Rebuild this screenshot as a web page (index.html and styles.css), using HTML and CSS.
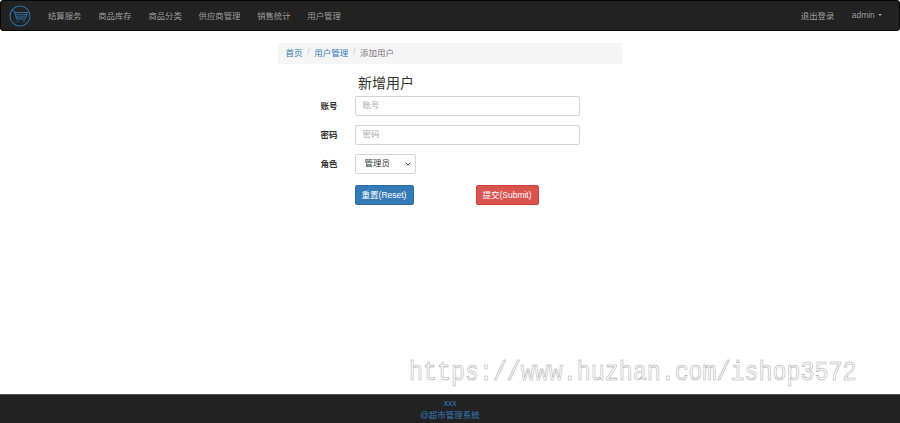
FILE: index.html
```html
<!DOCTYPE html>
<html lang="en">
<head>
    <meta charset="UTF-8">
    <title>超市管理系统</title>
    <link rel="stylesheet" href="styles.css">
</head>
<body>

    <!-- Top navigation -->
    <nav class="navbar">
        <svg class="logo" viewBox="0 0 22 22" width="22" height="22" fill="none" stroke="#2f6da3">
            <circle cx="11" cy="11" r="10" stroke-width="1.1"/>
            <path d="M2.5 5 L5.5 6 L7.5 14 H17" stroke-width="1"/>
            <path d="M6 7.5 H18.5 L17 12 H7 M6.5 9.7 H17.8" stroke-width="1"/>
            <circle cx="8.5" cy="16.3" r="0.8" fill="#2f6da3" stroke="none"/>
            <circle cx="15" cy="16.3" r="0.8" fill="#2f6da3" stroke="none"/>
        </svg>
        <ul class="nav-links">
            <li>结算服务</li>
            <li>商品库存</li>
            <li>商品分类</li>
            <li>供应商管理</li>
            <li>销售统计</li>
            <li>用户管理</li>
        </ul>
        <ul class="nav-links nav-right">
            <li>退出登录</li>
            <li class="nav-user">admin <span class="caret"></span></li>
        </ul>
    </nav>

    <!-- Main content -->
    <main class="content">
        <ol class="breadcrumb">
            <li><a href="#">首页</a></li>
            <li class="sep">/</li>
            <li><a href="#">用户管理</a></li>
            <li class="sep">/</li>
            <li class="current">添加用户</li>
        </ol>

        <form class="user-form">
            <h3>新增用户</h3>
            <div class="form-row">
                <label for="account">账号</label>
                <input type="text" id="account" class="field" placeholder="账号">
            </div>
            <div class="form-row">
                <label for="password">密码</label>
                <input type="text" id="password" class="field" placeholder="密码">
            </div>
            <div class="form-row">
                <label for="role">角色</label>
                <select id="role" class="field role-select">
                    <option>管理员</option>
                </select>
            </div>
            <div class="form-actions">
                <button type="reset" class="btn btn-blue">重置(Reset)</button>
                <button type="submit" class="btn btn-red">提交(Submit)</button>
            </div>
        </form>
    </main>

    <!-- Footer -->
    <footer class="footer">
        <p>xxx</p>
        <p>@超市管理系统</p>
    </footer>

    <!-- Watermark sits on top of the page -->
    <div class="watermark">https://www.huzhan.com/ishop3572</div>

</body>
</html>
```

FILE: styles.css
```css
/* Basic reset */
* {
    margin: 0;
    padding: 0;
    box-sizing: border-box;
}

body {
    position: relative;
    display: flex;
    flex-direction: column;
    height: 423px;
    overflow: hidden;
    font-family: "Liberation Sans", "Noto Sans CJK SC", sans-serif;
    font-size: 8.5px;
    color: #333;
    background-color: #fff;
}

ul, ol {
    list-style: none;
}

/* Navbar */
.navbar {
    display: flex;
    align-items: center;
    height: 31px;
    padding: 0 8px;
    background-color: #222;
    border: 1px solid #080808;
    border-radius: 3px;
}

.logo {
    flex-shrink: 0;
}

.nav-links {
    display: flex;
    gap: 16.7px;
    margin-left: 17px;
    padding-bottom: 2px;
    font-size: 8.4px;
    color: #9d9d9d;
}

.nav-right {
    margin-left: auto;
    margin-right: 9px;
    gap: 17.5px;
}

.nav-user {
    padding-top: 1px;
}

.caret {
    display: inline-block;
    margin-left: 1px;
    vertical-align: middle;
    border-top: 2.5px solid #9d9d9d;
    border-left: 2.5px solid transparent;
    border-right: 2.5px solid transparent;
}

/* Page body */
.content {
    flex: 1;
    width: 345px;
    margin: 12px auto 0;
}

.breadcrumb {
    display: flex;
    align-items: center;
    gap: 4.7px;
    height: 21px;
    padding: 0 8px 3px;
    background-color: #f5f5f5;
    border-radius: 2px;
}

.breadcrumb a {
    color: #337ab7;
    text-decoration: none;
}

.breadcrumb .sep {
    color: #ccc;
}

.breadcrumb .current {
    color: #777;
}

/* Form */
.user-form {
    padding-left: 43px;
}

.user-form h3 {
    margin: 8px 0 1px 37.5px;
    height: 23px;
    font-size: 14px;
    font-weight: 400;
    line-height: 23px;
}

.form-row {
    display: flex;
    align-items: center;
    height: 20px;
    margin-bottom: 9px;
}

.form-row label {
    width: 17px;
    margin-right: 17px;
    padding-bottom: 3px;
    font-weight: 700;
    white-space: nowrap;
}

.field {
    width: 225px;
    height: 20px;
    padding: 0 7px 2px;
    font-family: inherit;
    font-size: 8.5px;
    color: #333;
    background-color: #fff;
    border: 1px solid #d4d4d4;
    border-radius: 2px;
}

.field::placeholder {
    color: #aaa;
}

.role-select {
    width: 61px;
    padding-left: 9px;
    appearance: none;
    background-image: url("data:image/svg+xml,%3Csvg xmlns='http://www.w3.org/2000/svg' width='6' height='4' fill='none' stroke='%23444' stroke-width='1'%3E%3Cpath d='M.7.7 3 3 5.3.7'/%3E%3C/svg%3E");
    background-repeat: no-repeat;
    background-position: right 4px center;
}

.form-actions {
    display: flex;
    margin: 11px 0 0 34px;
}

.btn {
    height: 20px;
    padding-bottom: 2px;
    font-family: inherit;
    font-size: 8.5px;
    color: #fff;
    border-radius: 2px;
    cursor: pointer;
}

.btn-blue {
    width: 59px;
    margin-right: 62px;
    background-color: #337ab7;
    border: 1px solid #2e6da4;
}

.btn-red {
    width: 63px;
    background-color: #d9534f;
    border: 1px solid #d43f3a;
}

/* Footer */
.footer {
    height: 29px;
    padding-top: 3px;
    text-align: center;
    font-size: 8.5px;
    line-height: 11.5px;
    color: #337ab7;
    background-color: #222;
    border-top: 1px solid #555;
}

/* Watermark */
.watermark {
    position: absolute;
    left: 409px;
    top: 355px;
    font-family: "Liberation Mono", monospace;
    font-size: 23.3px;
    line-height: 30px;
    color: #fff;
    -webkit-text-stroke: 0.5px #a8a8a8;
    white-space: nowrap;
    opacity: 0.99;
    transform: scaleY(1.2);
    transform-origin: left top;
}
```
